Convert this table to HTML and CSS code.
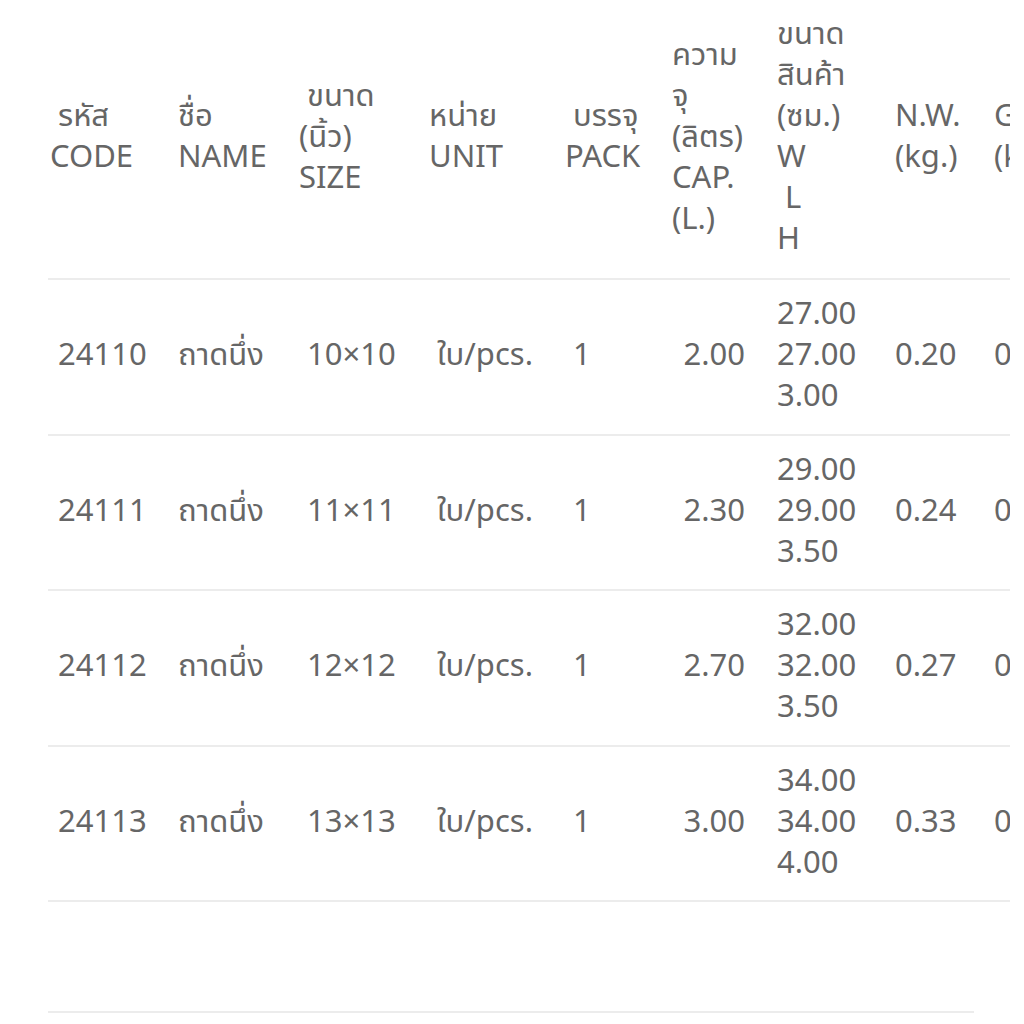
FILE: index.html
```html
<!DOCTYPE html>
<html lang="th">
<head>
<meta charset="utf-8">
<title>ตารางสินค้า</title>
<link rel="stylesheet" href="styles.css">
</head>
<body>
<div class="page">
  <div class="scroller">
    <table class="spec">
      <colgroup>
        <col class="c1"><col class="c2"><col class="c3"><col class="c4"><col class="c5"><col class="c6"><col class="c7"><col class="c8"><col class="c9">
      </colgroup>
      <thead>
        <tr>
          <th><span class="ind">รหัส</span><br>CODE</th>
          <th>ชื่อ<br>NAME</th>
          <th><span class="ind">ขนาด</span><br>(นิ้ว)<br>SIZE</th>
          <th>หน่าย<br>UNIT</th>
          <th><span class="ind">บรรจุ</span><br>PACK</th>
          <th>ความ<br>จุ<br>(ลิตร)<br>CAP.<br>(L.)</th>
          <th>ขนาด<br>สินค้า<br>(ซม.)<br>W<br><span class="ind">L</span><br>H</th>
          <th>N.W.<br>(kg.)</th>
          <th>G.W.<br>(kg.)</th>
        </tr>
      </thead>
      <tbody>
        <tr>
          <td><span class="ind">24110</span></td>
          <td>ถาดนึ่ง</td>
          <td><span class="ind">10×10</span></td>
          <td><span class="ind">ใบ/pcs.</span></td>
          <td><span class="ind">1</span></td>
          <td class="num">2.00</td>
          <td>27.00<br>27.00<br>3.00</td>
          <td>0.20</td>
          <td>0.22</td>
        </tr>
        <tr>
          <td><span class="ind">24111</span></td>
          <td>ถาดนึ่ง</td>
          <td><span class="ind">11×11</span></td>
          <td><span class="ind">ใบ/pcs.</span></td>
          <td><span class="ind">1</span></td>
          <td class="num">2.30</td>
          <td>29.00<br>29.00<br>3.50</td>
          <td>0.24</td>
          <td>0.26</td>
        </tr>
        <tr>
          <td><span class="ind">24112</span></td>
          <td>ถาดนึ่ง</td>
          <td><span class="ind">12×12</span></td>
          <td><span class="ind">ใบ/pcs.</span></td>
          <td><span class="ind">1</span></td>
          <td class="num">2.70</td>
          <td>32.00<br>32.00<br>3.50</td>
          <td>0.27</td>
          <td>0.30</td>
        </tr>
        <tr>
          <td><span class="ind">24113</span></td>
          <td>ถาดนึ่ง</td>
          <td><span class="ind">13×13</span></td>
          <td><span class="ind">ใบ/pcs.</span></td>
          <td><span class="ind">1</span></td>
          <td class="num">3.00</td>
          <td>34.00<br>34.00<br>4.00</td>
          <td>0.33</td>
          <td>0.36</td>
        </tr>
      </tbody>
    </table>
  </div>
  <div class="spacer"></div>
  <div class="rule"></div>
</div>
</body>
</html>
```

FILE: styles.css
```css
html, body {
  margin: 0;
  padding: 0;
  background: #ffffff;
}
body {
  font-family: "Noto Sans", "Noto Sans Thai", sans-serif;
  font-size: 31px;
  line-height: 41px;
  color: #666666;
}
.page {
  padding-left: 48px;
}
.scroller {
  width: 962px;
  overflow: hidden;
}
.spec {
  border-collapse: collapse;
  table-layout: fixed;
  width: 1040px;
}
.c1 { width: 128px; }
.c2 { width: 121px; }
.c3 { width: 130px; }
.c4 { width: 136px; }
.c5 { width: 107px; }
.c6 { width: 105px; }
.c7 { width: 118px; }
.c8 { width: 99px; }
.c9 { width: 96px; }
.spec th,
.spec td {
  font-weight: normal;
  text-align: left;
  vertical-align: middle;
  white-space: nowrap;
  line-height: 41px;
  padding: 12px 0 18.5px 2px;
  border-bottom: 2px solid #ececec;
}
.spec th {
  padding-bottom: 20px;
}
.spec td.num {
  text-align: right;
  padding-right: 30px;
}
.ind {
  padding-left: 8px;
}
.spacer {
  height: 109px;
}
.rule {
  width: 926px;
  border-top: 2px solid #ececec;
}
```
